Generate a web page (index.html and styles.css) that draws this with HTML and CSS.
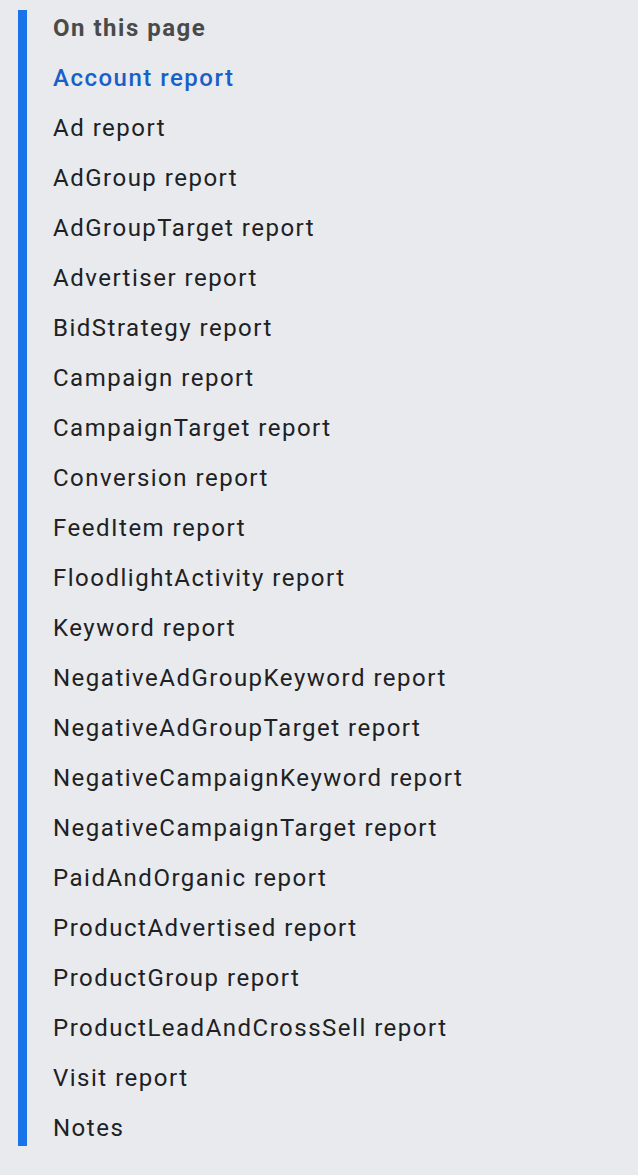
FILE: index.html
```html
<!DOCTYPE html>
<html>
<head>
<meta charset="utf-8">
<link rel="stylesheet" href="styles.css">
</head>
<body>
<nav class="toc">
  <div class="toc-title">On this page</div>
  <ul class="toc-list">
    <li class="active">Account report</li>
    <li>Ad report</li>
    <li>AdGroup report</li>
    <li>AdGroupTarget report</li>
    <li>Advertiser report</li>
    <li>BidStrategy report</li>
    <li>Campaign report</li>
    <li>CampaignTarget report</li>
    <li>Conversion report</li>
    <li>FeedItem report</li>
    <li>FloodlightActivity report</li>
    <li>Keyword report</li>
    <li>NegativeAdGroupKeyword report</li>
    <li>NegativeAdGroupTarget report</li>
    <li>NegativeCampaignKeyword report</li>
    <li>NegativeCampaignTarget report</li>
    <li>PaidAndOrganic report</li>
    <li>ProductAdvertised report</li>
    <li>ProductGroup report</li>
    <li>ProductLeadAndCrossSell report</li>
    <li>Visit report</li>
    <li>Notes</li>
  </ul>
</nav>
</body>
</html>
```
FILE: styles.css
```css
html, body {
  margin: 0;
  padding: 0;
  background: #e8eaed;
}
body {
  font-family: Roboto, "Noto Sans", sans-serif;
  font-size: 24px;
  letter-spacing: 1.5px;
  color: #202124;
  padding-top: 10px;
  padding-left: 18px;
}
.toc {
  border-left: 9px solid #1a73e8;
  padding-left: 26px;
  width: 560px;
}
.toc-title {
  font-weight: 700;
  color: #4a4a4a;
  line-height: 36px;
  margin-bottom: 14px;
}
.toc-list {
  list-style: none;
  margin: 0;
  padding: 0;
  display: flex;
  flex-direction: column;
  gap: 14px;
}
.toc-list li {
  line-height: 36px;
}
.toc-list li.active {
  color: #1a5fc8;
  font-weight: 500;
}
```
